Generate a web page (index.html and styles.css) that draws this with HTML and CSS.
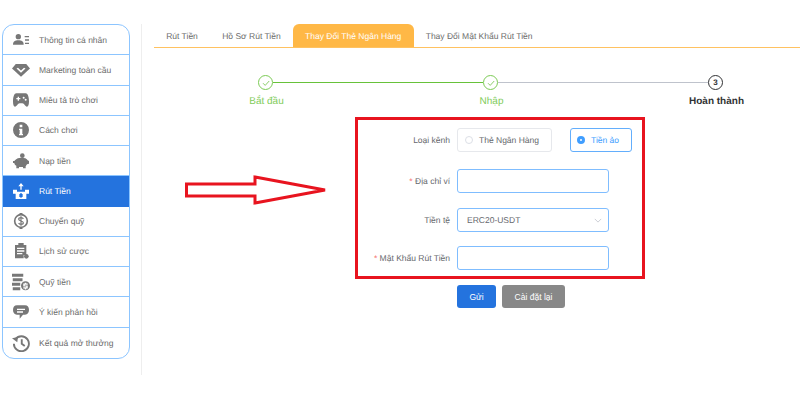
FILE: index.html
```html
<!DOCTYPE html>
<html lang="en">
<head>
    <meta charset="UTF-8">
    <title>Rút Tiền</title>
    <link rel="stylesheet" href="styles.css">
</head>
<body>
    <div class="page">
        <ul class="sidebar">
            <li class="side-item">
                <svg class="side-icon" viewBox="0 0 24 24"><ellipse cx="8" cy="7" rx="4" ry="4"/><path d="M0 19c0-5 3-6.500 8-6.500s8 1.500 8 6.500z"/><path d="M17.500 6H24v2h-6.500zM18 11h6v2h-6zM18 16h6v2h-6z"/></svg>
                <span>Thông tin cá nhân</span>
            </li>
            <li class="side-item">
                <svg class="side-icon side-icon-wide" viewBox="0 0 24 24"><path fill-rule="evenodd" d="M5 4h14l5 6-12 11L0 10zM6 10l6 5.500L18 10l-2-1-4 3.500L8 9z"/></svg>
                <span>Marketing toàn cầu</span>
            </li>
            <li class="side-item">
                <svg class="side-icon" viewBox="0 0 24 24"><path fill-rule="evenodd" d="M5 2h14c3 0 5 5 5 12 0 5-1 8-3 8-3 0-4-5-7-5h-4c-3 0-4 5-7 5-2 0-3-3-3-8C0 7 2 2 5 2zM7 7v2H5v2h2v2h2v-2h2V9H9V7zM16 7a1.500 1.500 0 100 3 1.500 1.500 0 000-3zM19 10a1.500 1.500 0 100 3 1.500 1.500 0 000-3z"/></svg>
                <span>Miêu tả trò chơi</span>
            </li>
            <li class="side-item">
                <svg class="side-icon" viewBox="0 0 24 24"><path fill-rule="evenodd" d="M12 0a12 12 0 110 24 12 12 0 010-24zM10 4v4h4V4zM9 10v2h1v6H9v2h6v-2h-1v-8z"/></svg>
                <span>Cách chơi</span>
            </li>
            <li class="side-item">
                <svg class="side-icon" viewBox="0 0 24 24"><circle cx="14" cy="4" r="3.500"/><path d="M3 11c2-3 6-4 10-4s8 1 9 4l2 1v4l-3 1-2 3v3h-4v-2H9v2H5v-4c-2-1-3-2-3-4H0v-3h2z"/></svg>
                <span>Nạp tiền</span>
            </li>
            <li class="side-item side-item-active">
                <svg class="side-icon" viewBox="0 0 24 24"><path d="M12 0l4 5h-3v5h-2V5H8z"/><path fill-rule="evenodd" d="M0 10h6v3h12v-3h6v6h-4v8H4v-8H0zM11 15v1.500H9.500V21H11v1h2v-1h1.500v-4.500H13V15z"/></svg>
                <span>Rút Tiền</span>
            </li>
            <li class="side-item">
                <svg class="side-icon" viewBox="0 0 24 24"><circle class="icon-ring" cx="12" cy="12" r="9.500"/><path d="M9 0h6l-3 3zM9 24h6l-3-3z"/><path class="icon-line" d="M15.500 9c-.5-1.500-2-2-3.500-2-2 0-3.500 1-3.500 2.500s1.500 2 3.500 2.500 3.500 1 3.500 2.500-1.500 2.500-3.500 2.500c-1.500 0-3-.5-3.500-2M12 5v14"/></svg>
                <span>Chuyển quỹ</span>
            </li>
            <li class="side-item">
                <svg class="side-icon" viewBox="0 0 24 24"><path fill-rule="evenodd" d="M3 3h5V0h8v3h4v15h-4v5H3zM6 7v2h11V7zM6 11v2h11v-2zM6 15v2h8v-2z"/><circle cx="20" cy="20" r="3.500"/></svg>
                <span>Lịch sử cược</span>
            </li>
            <li class="side-item">
                <svg class="side-icon side-icon-wide" viewBox="0 0 24 24"><path d="M0 1h15v4H0zM1 7h13v4H1zM0 13h11v4H0zM1 19h10v4H1z"/><path fill-rule="evenodd" d="M18 11a6 6 0 110 12 6 6 0 010-12zM15 14v4h4v1h-4v1.500h2V22h2v-1.500h2v-4h-4v-1h4V14h-2v-1h-2v1z"/></svg>
                <span>Quỹ tiền</span>
            </li>
            <li class="side-item">
                <svg class="side-icon" viewBox="0 0 24 24"><path fill-rule="evenodd" d="M6 2h12c4 0 6 3 6 7s-2 7-6 7h-3l-5 6v-6H6c-4 0-6-3-6-7s2-7 6-7zM6 7v2h12V7zM6 11v2h9v-2z"/></svg>
                <span>Ý kiến phản hồi</span>
            </li>
            <li class="side-item">
                <svg class="side-icon side-icon-wide" viewBox="0 0 24 24"><path class="icon-line icon-line-thick" d="M4.500 7A10 10 0 112.500 13"/><path d="M0 5.500l7 5.500 1-7z"/><path class="icon-line icon-line-thick" d="M13 7v6l4 3"/></svg>
                <span>Kết quả mở thưởng</span>
            </li>
        </ul>

        <div class="content">
            <div class="panel">
                <div class="tabs">
                    <span class="tab">Rút Tiền</span>
                    <span class="tab">Hồ Sơ Rút Tiền</span>
                    <span class="tab tab-active">Thay Đổi Thẻ Ngân Hàng</span>
                    <span class="tab">Thay Đổi Mật Khẩu Rút Tiền</span>
                </div>

                <div class="steps-track">
                    <span class="step-dot step-done"><svg viewBox="0 0 10 10"><path d="M2 5.200l2.200 2.200L8.200 3"/></svg></span>
                    <span class="step-line step-line-done"></span>
                    <span class="step-dot step-done"><svg viewBox="0 0 10 10"><path d="M2 5.200l2.200 2.200L8.200 3"/></svg></span>
                    <span class="step-line"></span>
                    <span class="step-dot step-current">3</span>
                </div>
                <div class="step-labels">
                    <span class="step-label step-label-done">Bắt đầu</span>
                    <span class="step-label step-label-done">Nhập</span>
                    <span class="step-label step-label-current">Hoàn thành</span>
                </div>

                <form class="bank-form">
                    <div class="form-row form-row-radio">
                        <label class="form-label">Loại kênh</label>
                        <span class="radio-box">
                            <span class="radio"></span>Thẻ Ngân Hàng
                        </span>
                        <span class="radio-box radio-box-on">
                            <span class="radio radio-on"></span>Tiền ảo
                        </span>
                    </div>
                    <div class="form-row form-row-address">
                        <label class="form-label"><i class="req">*</i> Địa chỉ ví</label>
                        <input class="form-input" type="text">
                    </div>
                    <div class="form-row form-row-currency">
                        <label class="form-label">Tiền tệ</label>
                        <div class="form-input form-select">
                            <span>ERC20-USDT</span>
                            <svg viewBox="0 0 10 6"><path d="M1 1l4 4 4-4"/></svg>
                        </div>
                    </div>
                    <div class="form-row form-row-password">
                        <label class="form-label"><i class="req">*</i> Mật Khẩu Rút Tiền</label>
                        <input class="form-input" type="password">
                    </div>
                </form>

                <div class="form-actions">
                    <button class="btn btn-send" type="button">Gửi</button>
                    <button class="btn btn-reset" type="button">Cài đặt lại</button>
                </div>
            </div>

            <svg class="arrow" viewBox="0 0 146 30"><path d="M1.500 9H70V2l70 13-70 13v-7H1.500z"/></svg>
        </div>
    </div>
</body>
</html>
```

FILE: styles.css
```css
body, html {
    margin: 0;
    padding: 0;
    background-color: #fff;
    font: 8.5px 'Liberation Sans', Arial, sans-serif;
    color: #66686d;
    text-rendering: geometricPrecision;
}

.page {
    display: flex;
    align-items: flex-start;
    padding: 24px 0 0 2px;
}

/* left menu */
.sidebar {
    list-style: none;
    margin: 0;
    padding: 0;
    width: 128px;
    box-sizing: border-box;
    border: 1px solid #8cc5ff;
    border-radius: 12px;
    overflow: hidden;
    flex-shrink: 0;
}

.side-item {
    display: flex;
    align-items: center;
    height: 30.27px;
    box-sizing: border-box;
    padding-left: 10px;
    border-bottom: 1px solid #8cc5ff;
    color: #6c6c6c;
}

.side-item:last-child {
    border-bottom: 0;
}

.side-item span {
    margin-left: 10px;
}

.side-icon {
    width: 16px;
    height: 16px;
    fill: #777;
    flex-shrink: 0;
}

.side-icon-wide {
    width: 18px;
    height: 18px;
    margin: 0 -1px;
}

.side-item-active {
    background-color: #2473de;
    color: #fff;
    border-bottom-color: #2473de;
}

.side-item-active .side-icon {
    fill: #fff;
}

.icon-ring {
    fill: none;
    stroke: #777;
    stroke-width: 2.500;
}

.icon-line {
    fill: none;
    stroke: #777;
    stroke-width: 1.800;
}

.icon-line-thick {
    stroke-width: 2.500;
}

/* right side */
.content {
    position: relative;
    flex: 1;
    height: 351px;
    margin-left: 11px;
    padding-left: 12px;
    border-left: 1px solid #eee;
}

.panel {
    height: 296px;
    border-right: 1px solid #f0f0f0;
}

.tabs {
    display: flex;
    height: 24px;
    box-sizing: border-box;
    border-bottom: 1px solid #ffc261;
}

.tab {
    display: flex;
    align-items: center;
    padding: 0 12.200px;
    color: #6c6c6c;
}

.tab-active {
    background-color: #ffb846;
    color: #fff;
    border-radius: 6px 6px 0 0;
}

.steps-track {
    display: flex;
    align-items: center;
    margin: 27px 0 0 104px;
}

.step-dot {
    display: flex;
    align-items: center;
    justify-content: center;
    width: 15px;
    height: 15px;
    box-sizing: border-box;
    border-radius: 50%;
    border: 1.500px solid #7ccb55;
    background-color: #fff;
    flex-shrink: 0;
}

.step-dot svg {
    width: 10px;
    height: 10px;
    fill: none;
    stroke: #8ccf6a;
    stroke-width: 1;
}

.step-current {
    border-color: #303133;
    color: #303133;
    font-size: 8px;
    font-weight: bold;
}

.step-line {
    width: 210px;
    height: 1.500px;
    background-color: #bfc3cc;
}

.step-line-done {
    background-color: #67c23a;
}

.step-labels {
    display: grid;
    grid-template-columns: repeat(3, 225px);
    margin-top: 5px;
}

.step-label {
    text-align: center;
    font-size: 10px;
    line-height: 13px;
}

.step-label-done {
    color: #7fcc5a;
}

.step-label-current {
    color: #303133;
    font-weight: bold;
}

/* the red box round the form */
.bank-form {
    width: 290px;
    height: 162px;
    box-sizing: border-box;
    margin: 9px 0 0 201px;
    border: 3px solid #e8141f;
    padding-top: 8px;
}

.form-row {
    display: flex;
    align-items: center;
}

.form-row-address {
    margin-top: 17px;
}

.form-row-currency {
    margin-top: 15px;
}

.form-row-password {
    margin-top: 14px;
}

.form-label {
    width: 92px;
    margin-right: 7px;
    flex-shrink: 0;
    text-align: right;
    white-space: nowrap;
}

.req {
    color: #f56c6c;
    font-style: normal;
}

.radio-box {
    display: flex;
    align-items: center;
    height: 24px;
    box-sizing: border-box;
    padding: 0 12px 0 7px;
    border: 1px solid #e6e8ec;
    border-radius: 3px;
    white-space: nowrap;
}

.radio-box-on {
    margin-left: 18px;
    padding: 0 12px 0 6px;
    border-color: #63aefc;
    color: #409eff;
}

.radio {
    width: 8px;
    height: 8px;
    box-sizing: border-box;
    margin-right: 6px;
    border: 1px solid #dcdfe6;
    border-radius: 50%;
}

.radio-on {
    border: 3px solid #409eff;
    background-color: #fff;
}

.form-input {
    display: block;
    width: 152px;
    height: 24px;
    box-sizing: border-box;
    margin: 0;
    padding: 0 10px;
    border: 1px solid #7fbdff;
    border-radius: 3px;
    outline: 0;
    background-color: #fff;
}

.form-select {
    display: flex;
    align-items: center;
    justify-content: space-between;
    padding: 0 6px 0 9px;
}

.form-select svg {
    width: 8px;
    height: 5px;
    fill: none;
    stroke: #c0c4cc;
    stroke-width: 1;
}

.form-actions {
    display: flex;
    gap: 6px;
    margin: 6px 0 0 303px;
}

.btn {
    height: 23px;
    border: 0;
    border-radius: 3px;
    padding: 0;
    color: #fff;
    font: 8.500px 'Liberation Sans', Arial, sans-serif;
}

.btn-send {
    width: 39px;
    background-color: #2473de;
}

.btn-reset {
    width: 63px;
    background-color: #888;
}

/* annotation arrow lying over the empty part of the page */
.arrow {
    position: absolute;
    left: 43px;
    top: 151px;
    width: 146px;
    height: 30px;
    fill: #fff;
    stroke: #e8141f;
    stroke-width: 3;
}
```
